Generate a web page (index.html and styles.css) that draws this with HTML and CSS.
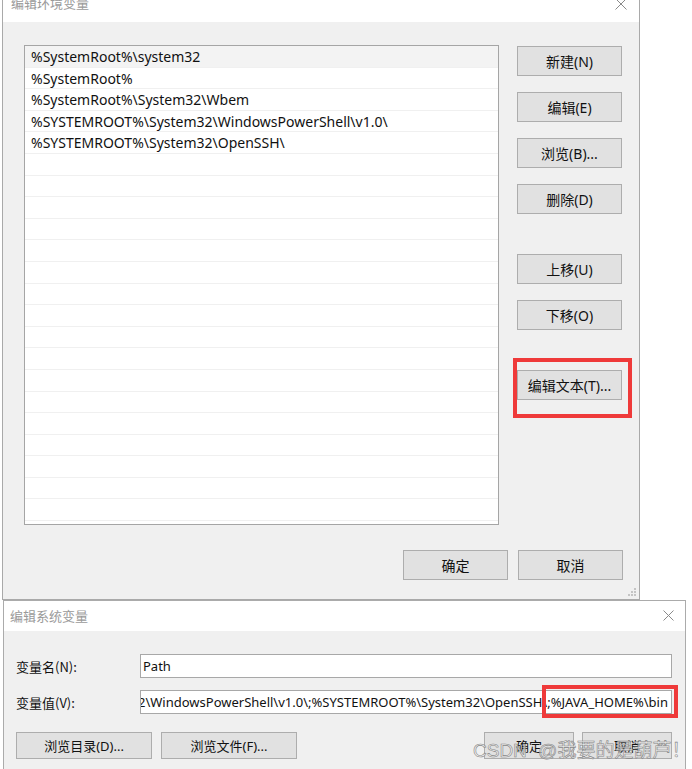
FILE: index.html
```html
<!DOCTYPE html>
<html lang="zh-CN">
<head>
<meta charset="utf-8">
<title>编辑环境变量</title>
<link rel="stylesheet" href="styles.css">
</head>
<body>
<div class="page">
  <div class="dlg dlg-top">
    <div class="titlebar">
      <span class="title">编辑环境变量</span>
      <svg class="close" width="12" height="12" viewBox="0 0 12 12"><path d="M0.5 0.5L11.5 11.5M11.5 0.5L0.5 11.5" stroke="#8a8a8a" stroke-width="1"/></svg>
    </div>
    <div class="body">
      <div class="main">
        <div class="list">
          <div class="row sel">%SystemRoot%\system32</div>
          <div class="row">%SystemRoot%</div>
          <div class="row">%SystemRoot%\System32\Wbem</div>
          <div class="row">%SYSTEMROOT%\System32\WindowsPowerShell\v1.0\</div>
          <div class="row">%SYSTEMROOT%\System32\OpenSSH\</div>
          <div class="row"></div><div class="row"></div><div class="row"></div><div class="row"></div>
          <div class="row"></div><div class="row"></div><div class="row"></div><div class="row"></div>
          <div class="row"></div><div class="row"></div><div class="row"></div><div class="row"></div>
          <div class="row"></div><div class="row"></div><div class="row"></div><div class="row"></div>
          <div class="row"></div>
        </div>
        <div class="side">
          <button class="btn">新建(N)</button>
          <button class="btn">编辑(E)</button>
          <button class="btn">浏览(B)...</button>
          <button class="btn">删除(D)</button>
          <button class="btn far">上移(U)</button>
          <button class="btn">下移(O)</button>
          <div class="mark-wrap far">
            <button class="btn">编辑文本(T)...</button>
            <span class="mark mark-a"></span>
          </div>
        </div>
      </div>
      <div class="footer">
        <button class="btn">确定</button>
        <button class="btn">取消</button>
      </div>
      <svg class="grip" width="10" height="10" viewBox="0 0 10 10"><g fill="#c4c4c4"><rect x="8" y="0" width="2" height="2"/><rect x="5" y="3" width="2" height="2"/><rect x="8" y="3" width="2" height="2"/><rect x="2" y="6" width="2" height="2"/><rect x="5" y="6" width="2" height="2"/><rect x="8" y="6" width="2" height="2"/></g></svg>
    </div>
  </div>

  <div class="dlg dlg-bot">
    <div class="titlebar2">
      <span class="title">编辑系统变量</span>
      <svg class="close2" width="11" height="11" viewBox="0 0 11 11"><path d="M0.5 0.5L10.5 10.5M10.5 0.5L0.5 10.5" stroke="#8a8a8a" stroke-width="1"/></svg>
    </div>
    <div class="body2">
      <div class="field">
        <label class="lbl">变量名(N):</label>
        <div class="input"><span class="val">Path</span></div>
      </div>
      <div class="field">
        <label class="lbl">变量值(V):</label>
        <div class="input input-end"><span class="val">%SystemRoot%\system32;%SystemRoot%;%SystemRoot%\System32\Wbem;%SYSTEMROOT%\System32\WindowsPowerShell\v1.0\;%SYSTEMROOT%\System32\OpenSSH\;%JAVA_HOME%\bin</span></div>
        <span class="mark mark-b"></span>
      </div>
      <div class="actions">
        <button class="btn2 wide">浏览目录(D)...</button>
        <button class="btn2 wide">浏览文件(F)...</button>
        <span class="grow"></span>
        <button class="btn2 narrow">确定</button>
        <button class="btn2 narrow">取消</button>
      </div>
      <span class="watermark">CSDN @我要的是葫芦！</span>
    </div>
  </div>
</div>
</body>
</html>
```

FILE: styles.css
```css
* { box-sizing: border-box; }
html, body { margin: 0; padding: 0; background: #fff; }
.page {
  width: 692px;
  height: 769px;
  overflow: hidden;
  background: #fff;
  font-family: "Noto Sans", "Noto Sans CJK SC", sans-serif;
  color: #000;
}
.dlg { background: #f0f0f0; border: 1px solid #a9a9a9; }
.dlg-top {
  margin-top: -10px;
  margin-left: 2px;
  width: 638px;
  height: 610px;
  position: relative;
}
.titlebar {
  height: 31px;
  background: #fff;
  display: flex;
  justify-content: space-between;
  align-items: flex-start;
  padding: 4px 12px 0 8px;
}
.title {
  font-family: "Noto Sans CJK SC", sans-serif;
  font-size: 13px;
  line-height: 16px;
  color: #9a9a9a;
}
.close { margin-top: 3px; }
.body { padding: 23px 16px 0 21px; position: relative; height: 578px; }
.main { display: flex; gap: 18px; }
.list {
  width: 475px;
  height: 480px;
  background: #fff;
  border: 1px solid #a5a5a5;
  overflow: hidden;
}
.row {
  height: 21.6px;
  border-bottom: 1px solid #f0f0f0;
  padding-left: 6px;
  font-size: 14px;
  line-height: 21px;
  white-space: nowrap;
  color: #111;
}
.row.sel { background: #f3f3f3; }
.side { display: flex; flex-direction: column; gap: 16px; padding-top: 1px; }
.btn {
  width: 105px;
  height: 30px;
  background: #e1e1e1;
  border: 1px solid #adadad;
  font-family: "Noto Sans", "Noto Sans CJK SC", sans-serif;
  font-size: 14px;
  color: #111;
  padding: 0;
  margin: 0;
}
.far { margin-top: 24px; }
.mark-wrap { position: relative; width: 105px; height: 30px; }
.mark { position: absolute; border: 4px solid #ef3a3a; pointer-events: none; }
.mark-a { left: -4px; top: -12px; width: 119px; height: 60px; }
.footer {
  display: flex;
  justify-content: flex-end;
  gap: 10px;
  margin-top: 25px;
}
.grip { position: absolute; right: 3px; bottom: 2px; }

.dlg-bot {
  margin-left: 3px;
  width: 683px;
  height: 180px;
  border-color: #ababab;
}
.titlebar2 {
  height: 30px;
  background: #fff;
  display: flex;
  justify-content: space-between;
  align-items: center;
  padding: 0 11px 0 6px;
}
.close2 { margin-top: -2px; }
.body2 { padding: 23px 13px 0 12px; position: relative; }
.field { display: flex; align-items: center; margin-bottom: 12px; position: relative; }
.lbl {
  width: 124px;
  flex-shrink: 0;
  font-family: "Noto Sans CJK SC", sans-serif;
  font-size: 13px;
  color: #111;
  white-space: nowrap;
}
.input {
  flex: 1;
  min-width: 0;
  height: 24px;
  background: #fff;
  border: 1px solid #a8a8a8;
  display: flex;
  align-items: center;
  padding: 0 3px 0 2px;
  overflow: hidden;
}
.val {
  flex-shrink: 0;
  font-size: 13px;
  white-space: nowrap;
  color: #111;
}
.input-end { justify-content: flex-end; }
.mark-b { right: -6px; top: -5px; width: 136px; height: 33px; }
.actions { display: flex; gap: 9px; margin-top: 18px; }
.grow { flex: 1; }
.btn2 {
  height: 27px;
  background: #e1e1e1;
  border: 1px solid #adadad;
  font-family: "Noto Sans", "Noto Sans CJK SC", sans-serif;
  font-size: 13px;
  color: #111;
  padding: 0;
  margin: 0;
}
.wide { width: 136px; }
.narrow { width: 90px; margin-left: -1px; }
.watermark {
  position: absolute;
  left: 469px;
  top: 108px;
  font-family: "Liberation Sans", "Noto Sans CJK SC", sans-serif;
  font-size: 19px;
  line-height: 24px;
  color: rgba(246, 246, 246, 0.7);
  -webkit-text-stroke: 0.6px #858585;
  white-space: nowrap;
  word-spacing: 6px;
}
```
